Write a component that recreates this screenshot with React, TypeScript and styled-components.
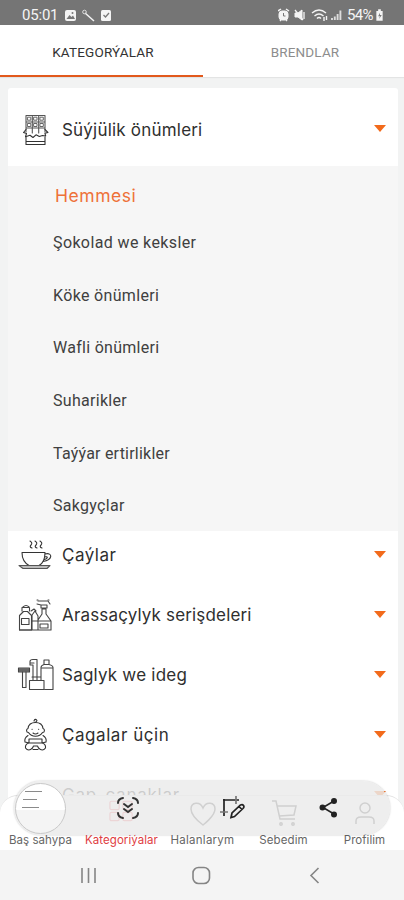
import React from "react";
import styled, { createGlobalStyle } from "styled-components";

const Global = createGlobalStyle`
  * { box-sizing: border-box; }
  body { margin: 0; background: #f3f4f4; }
`;

const Phone = styled.div`
  position: relative;
  width: 404px;
  height: 900px;
  display: flex;
  flex-direction: column;
  overflow: hidden;
  background: #f2f3f3;
  font-family: Roboto, "Liberation Sans", sans-serif;
`;

const StatusBar = styled.header`
  display: flex;
  align-items: center;
  justify-content: space-between;
  flex: none;
  height: 25px;
  padding: 5px 20px 0 22px;
  background: #757575;
  color: #f4f4f4;
  font-size: 15px;
  svg { display: block; }
`;

const StatusGroup = styled.div<{ $gap: number }>`
  display: flex;
  align-items: center;
  gap: ${(p) => p.$gap}px;
`;

const StatusText = styled.span<{ $spacing: number }>`
  font-size: 15px;
  line-height: 18px;
  letter-spacing: ${(p) => p.$spacing}px;
`;

const Tabs = styled.nav`
  display: flex;
  flex: none;
  height: 52px;
  background: #fff;
  box-shadow: 0 1px 1px #e3e4e4;
`;

const Tab = styled.div<{ $active?: boolean }>`
  flex: ${(p) => (p.$active ? "0 0 203px" : "1")};
  display: flex;
  align-items: center;
  justify-content: center;
  padding-top: 4px;
  padding-left: ${(p) => (p.$active ? 3 : 3)}px;
  font-size: 13.5px;
  letter-spacing: ${(p) => (p.$active ? "0.18px" : "0.15px")};
  color: ${(p) => (p.$active ? "#333" : "#8d8d8d")};
  border-bottom: 2px solid ${(p) => (p.$active ? "#e2591c" : "transparent")};
`;

const List = styled.main`
  flex: 1;
  min-height: 0;
  overflow: hidden;
  padding: 11px 6px 0 8px;
`;

const Card = styled.section`
  border-radius: 3px 3px 0 0;
  overflow: hidden;
  background: #fff;
`;

const Row = styled.div<{ $height: number; $lift?: number; $drop?: number }>`
  display: flex;
  align-items: center;
  height: ${(p) => p.$height}px;
  padding: ${(p) => p.$drop ?? 0}px 12px ${(p) => p.$lift ?? 0}px 9px;
`;

const RowIcon = styled.div`
  width: 38px;
  height: 36px;
  flex: none;
  svg { display: block; }
`;

const RowTitle = styled.div<{ $spacing: number }>`
  flex: 1;
  margin-left: 7px;
  font-family: Inter, "Noto Sans", sans-serif;
  font-size: 17px;
  line-height: 24px;
  letter-spacing: ${(p) => p.$spacing}px;
  white-space: nowrap;
  color: #2f2f2f;
`;

const Caret = styled.span`
  width: 0;
  height: 0;
  margin-bottom: 2px;
  border: 6px solid transparent;
  border-top: 7px solid #f26a1b;
  border-bottom: 0;
`;

const SubList = styled.div`
  height: 365px;
  padding: 17px 0 0 45px;
  background: #f6f6f6;
`;

const AllItem = styled.div`
  height: 34px;
  padding: 0 0 0 2px;
  font-family: Inter, "Noto Sans", sans-serif;
  font-size: 17.5px;
  line-height: 26px;
  letter-spacing: 0.55px;
  color: #ee7138;
`;

const SubItem = styled.div<{ $spacing: number }>`
  height: 52.7px;
  font-size: 16px;
  line-height: 52.7px;
  letter-spacing: ${(p) => p.$spacing}px;
  white-space: nowrap;
  color: #404040;
`;

const BottomNav = styled.nav`
  position: relative;
  display: flex;
  flex: none;
  height: 55px;
  margin-top: -14px;
  background: #fff;
  border-top: 1px solid #e4e4e4;
  border-radius: 18px 18px 0 0;
`;

const NavItem = styled.div<{ $active?: boolean; $spacing: number }>`
  flex: none;
  width: 81px;
  display: flex;
  flex-direction: column;
  align-items: center;
  justify-content: space-between;
  padding: 2px 0 3px;
  color: ${(p) => (p.$active ? "#df3d42" : "#666")};
  font-family: Inter, "Noto Sans", sans-serif;
  font-size: 11.5px;
  line-height: 14px;
  letter-spacing: ${(p) => p.$spacing}px;
  white-space: nowrap;
  svg { display: block; }
`;

const SystemNav = styled.footer`
  display: flex;
  flex: none;
  height: 50px;
  align-items: center;
  justify-content: center;
  background: #f4f4f4;
  svg { display: block; }
`;

const ToolPill = styled.div`
  position: absolute;
  left: 14px;
  top: 781px;
  width: 376px;
  height: 54px;
  display: flex;
  align-items: center;
  border-radius: 27px;
  background: rgba(235, 235, 235, 0.84);
  box-shadow: 0 0 2px rgba(0, 0, 0, 0.25);
`;

const Preview = styled.div`
  flex: none;
  display: flex;
  flex-direction: column;
  gap: 5px;
  width: 51px;
  height: 51px;
  margin-left: 1px;
  padding: 6px 0 0 4px;
  border: 1px solid #c9c9c9;
  border-radius: 50%;
  overflow: hidden;
  background: linear-gradient(#fff 0 52%, #f4f4f4 54%);
`;

const PreviewLine = styled.div<{ $width: number; $indent: number }>`
  height: 2px;
  margin-left: ${(p) => p.$indent}px;
  width: ${(p) => p.$width}px;
  border-bottom: 1px solid #8a8a8a;
  margin-bottom: 1px;
`;

const Tool = styled.div<{ $before: number }>`
  flex: none;
  margin-left: ${(p) => p.$before}px;
  svg { display: block; }
`;

const line = { fill: "none", stroke: "#333", strokeWidth: 1.1, strokeLinecap: "round", strokeLinejoin: "round" } as const;

const Chocolate = () => (
  <svg width="38" height="36" viewBox="0 0 38 36" {...line}>
    <path d="M9 20V3.5h19V20M15.3 4v17M21.7 4v17M9 10h19M9 16h19" stroke="#555" />
    <path d="M10.8 5.2h3v3h-3zM17 5.2h3v3h-3zM23.3 5.2h3v3h-3zM10.8 11.5h3v3h-3zM17 11.5h3v3h-3zM23.3 11.5h3v3h-3z" stroke="#666" strokeWidth="1" />
    <path d="M9 17.5l-2.5 3 3 1-1 3.2 4.5-1.5 3 2.3 3-2.7 3.3 1.7 3.2-1 3.2.5-.8-2.8 3-.7-3-3.2M9 25v7.5h19V25M9 29.5h19" />
  </svg>
);

const Tea = () => (
  <svg width="38" height="36" viewBox="0 0 38 36" {...line}>
    <path d="M13 4q3 2 1 4t1 3M18 4q3 2 1 4t1 3M23 4q3 2 1 4t1 3" />
    <path d="M5 15.5h23q0 10-6 13H12q-7-4-7-13zM28 17c8-2 8 6-2 7.5M27.5 20c4-1 3.5 1.6 0 2.5" />
    <path d="M2 28.5h31l-3 3H6z" fill="#bbb" stroke="#555" />
  </svg>
);

const Cleaning = () => (
  <svg width="38" height="36" viewBox="0 0 38 36" {...line} stroke="#444">
    <path d="M2.5 33V18.5l4-4h4l4 4V33zM5 14v-3.5h7.5V14M6 10q3-3 6 0M4.500 21.500h7.500v6H4.500z" />
    <path d="M15 33V18l3-4 3 5v4M14 14l3-2 2 2M15 24h6M21 33V23l4-6v-5h4v5l5 7v9zM21 24h13M24 11h6V8h-6zM21 4h10l2 3M20 7l4 1M23 27h8v4h-8zM2.500 33H34" />
    <path d="M31 3h3M20 3h2" strokeDasharray="1 2" />
  </svg>
);

const Hygiene = () => (
  <svg width="38" height="36" viewBox="0 0 38 36" {...line} stroke="#444">
    <path d="M1.500 11h11v4h-11z" fill="#888" />
    <path d="M2 13h10M5.500 15v15.500h3.500V15" />
    <path d="M16 23V8h-3V4.500q0-2 3-2h4V23M13 6h4M12.500 23.500H27v9H12.500zM15 20h9M24 23V10.500q0-2 3-3h5q4 1 4 3v22H28M27 7V3h5v4M25 11h11" />
  </svg>
);

const Baby = () => (
  <svg width="38" height="36" viewBox="0 0 38 36" {...line}>
    <path d="M17 4q1-3 3-.5-.2 1.500-2 1.800" />
    <path d="M18.500 5.500c-4 0-7 2-7.500 6-2 .5-2 4 .5 4 3 5 11 5 14 0 2.500 0 2.500-3.500.5-4-.5-4-3.500-6-7.500-6z" />
    <path d="M15 12.300h.2M21.500 12.300h.2M16 16q2.500 2 5 0" />
    <path d="M11 18.500q-4 2.500-3 6.500l4 1v-3M26 18.500q4 2.500 3 6.500l-4 1v-3M12 22h13v4H12zM12 26q-4 1-3.500 5 3 4 7 0l1-2h4l1 2q4 4 7 0 .5-4-3.500-5M16 32.500h5" />
  </svg>
);

const CategoriesIcon = () => (
  <svg width="25" height="25" viewBox="0 0 27 26" fill="#fff1f1" stroke="#ee626c" strokeWidth="1.3">
    <rect x="1" y="3" width="10" height="9" rx="1.500" /><rect x="15" y="3" width="10" height="9" rx="1.500" />
    <rect x="1" y="15" width="10" height="9" rx="1.500" /><rect x="15" y="15" width="10" height="9" rx="1.500" />
  </svg>
);

const HeartIcon = () => (
  <svg width="28" height="30" viewBox="0 0 28 30" fill="none" stroke="#444" strokeWidth="1.500">
    <path d="M14 27Q2 18 2 11c0-7 9-8 12-1 3-7 12-6 12 1 0 7-12 16-12 16z" />
  </svg>
);

const CartIcon = () => (
  <svg width="30" height="30" viewBox="0 0 30 30" fill="none" stroke="#444" strokeWidth="1.500">
    <path d="M3 3h4l4 18h15M8 8h19l-2 9-15 1" /><circle cx="12" cy="26" r="1.200" /><circle cx="24" cy="26" r="1.200" />
  </svg>
);

const PersonIcon = () => (
  <svg width="26" height="29" viewBox="0 0 26 29" fill="none" stroke="#444" strokeWidth="1.500">
    <circle cx="13" cy="10" r="5" /><path d="M4 26v-3q0-4 5-4h8q5 0 5 4v3" />
  </svg>
);

const rows = [
  { title: "Çaýlar", spacing: 0.5, icon: <Tea />, height: 54, lift: 6 },
  { title: "Arassaçylyk serişdeleri", spacing: 0.16, icon: <Cleaning />, height: 60 },
  { title: "Saglyk we ideg", spacing: 0.22, icon: <Hygiene />, height: 60 },
  { title: "Çagalar üçin", spacing: 0.55, icon: <Baby />, height: 60 },
  { title: "Gap-çanaklar", spacing: 0.75, icon: null, height: 60 },
];

const subs = [
  ["Şokolad we keksler", 0.38],
  ["Köke önümleri", 0.34],
  ["Wafli önümleri", 0.28],
  ["Suharikler", 0.3],
  ["Taýýar ertirlikler", 0.22],
  ["Sakgyçlar", 0.3],
] as const;

export default function App() {
  return (
    <>
      <Global />
      <Phone>
        <StatusBar>
          <StatusGroup $gap={6}>
            <StatusText $spacing={-0.2}>05:01</StatusText>
            <svg width="49" height="13" viewBox="0 0 49 13">
              <rect x="1" y="1" width="11" height="11" rx="2" fill="#f4f4f4" />
              <path d="M2.500 10l3-4 2 2 1.500-1.500 2 3.500z" fill="#777" /><circle cx="8.500" cy="4" r="1" fill="#777" />
              <path d="M21 4l9 8" stroke="#f4f4f4" strokeWidth="1.500" /><circle cx="20.500" cy="3" r="1.800" stroke="#ddd" fill="none" />
              <rect x="37" y="1" width="10" height="11" rx="1.500" fill="#f4f4f4" /><path d="M39.500 6l2 2 3.500-4" stroke="#777" fill="none" strokeWidth="1.300" />
            </svg>
          </StatusGroup>
          <StatusGroup $gap={4}>
            <svg width="65" height="14" viewBox="0 0 65 14" fill="none" stroke="#f4f4f4">
              <rect x="1" y="3" width="9" height="9" rx="3" fill="#f4f4f4" /><path d="M0 3l3-2M8 1l3 2M2 13l1-1M9 13l-1-1" strokeWidth="1.500" /><path d="M5.500 5v3h2" stroke="#777" />
              <path d="M17 5h3l4-3v10l-4-3h-3z" fill="#f4f4f4" /><path d="M17 2l8 10M26 4v7" strokeWidth="1.300" />
              <path d="M34 5q7-6 14 0M36.500 8q4.500-4 9 0M39 10.500q2-2 4 0M46 9v4M48.500 8v4" strokeWidth="1.400" />
              <path d="M54 12v-2M56.800 12V8.500M59.600 12V6M62.400 12V2.500" strokeWidth="1.900" stroke="#ddd" />
            </svg>
            <StatusGroup $gap={2}>
              <StatusText $spacing={-0.6}>54%</StatusText>
              <svg width="9" height="12" viewBox="0 0 10 13"><path d="M3.500 0h3v2h2v11h-7V2h2z" fill="#f4f4f4" /><path d="M5.500 4L3.500 8h2l-1 3 3-4.500h-2z" fill="#777" /></svg>
            </StatusGroup>
          </StatusGroup>
        </StatusBar>

        <Tabs>
          <Tab $active>KATEGORÝALAR</Tab>
          <Tab>BRENDLAR</Tab>
        </Tabs>

        <List>
          <Card>
            <Row $height={78} $drop={5}>
              <RowIcon><Chocolate /></RowIcon>
              <RowTitle $spacing={0.2}>Süýjülik önümleri</RowTitle>
              <Caret />
            </Row>
            <SubList>
              <AllItem>Hemmesi</AllItem>
              {subs.map(([name, spacing]) => <SubItem key={name} $spacing={spacing}>{name}</SubItem>)}
            </SubList>
            {rows.map((r) => (
              <Row key={r.title} $height={r.height} $lift={r.lift}>
                <RowIcon>{r.icon}</RowIcon>
                <RowTitle $spacing={r.spacing}>{r.title}</RowTitle>
                <Caret />
              </Row>
            ))}
          </Card>
        </List>

        <BottomNav>
          <NavItem $spacing={0.05}><span /><span>Baş sahypa</span></NavItem>
          <NavItem $active $spacing={0.05}><CategoriesIcon /><span>Kategoriýalar</span></NavItem>
          <NavItem $spacing={0.25}><HeartIcon /><span>Halanlarym</span></NavItem>
          <NavItem $spacing={0.1}><CartIcon /><span>Sebedim</span></NavItem>
          <NavItem $spacing={0.05}><PersonIcon /><span>Profilim</span></NavItem>
        </BottomNav>

        <SystemNav>
          <svg width="404" height="50" viewBox="0 0 404 50" fill="none" stroke="#858585" strokeWidth="1.600">
            <path d="M82 18v15M88.500 18v15M95 18v15" />
            <rect x="193" y="17.500" width="16.500" height="16" rx="5.500" />
            <path d="M318.500 18l-7.500 7.500 7.500 7.500" />
          </svg>
        </SystemNav>

        <ToolPill>
          <Preview>
            <PreviewLine $indent={5} $width={17} />
            <PreviewLine $indent={3} $width={14} />
            <PreviewLine $indent={2} $width={17} />
          </Preview>
          <Tool $before={50}>
            <svg width="24" height="24" viewBox="0 0 24 24" fill="none" stroke="#333" strokeWidth="2" strokeLinecap="round">
              <path d="M2 7q0-4 5-5M17 2q5 1 5 5M22 17q0 4-5 5M7 22q-5-1-5-5" />
              <path d="M8 8l4 3 4-3M8 13l4 3 4-3" />
            </svg>
          </Tool>
          <Tool $before={79}>
            <svg width="26" height="26" viewBox="0 0 26 26" fill="none" stroke="#222" strokeWidth="1.700">
              <path d="M5 4v17M4 5h16" /><path d="M1 17h8M17 1v8" stroke="#777" />
              <path d="M12 22.500l1-4.500 8.500-8q2-1 3 .5t-.5 3L15.500 21.500zM20 11.500l3 3" />
            </svg>
          </Tool>
          <Tool $before={74}>
            <svg width="20" height="22" viewBox="0 0 20 22" fill="#222" stroke="#222" strokeWidth="1.600">
              <path d="M15 4L4 10.500 15 17" fill="none" /><circle cx="15" cy="4" r="2.200" /><circle cx="3.500" cy="10.500" r="2.200" /><circle cx="15" cy="17.500" r="2.200" />
            </svg>
          </Tool>
        </ToolPill>
      </Phone>
    </>
  );
}
